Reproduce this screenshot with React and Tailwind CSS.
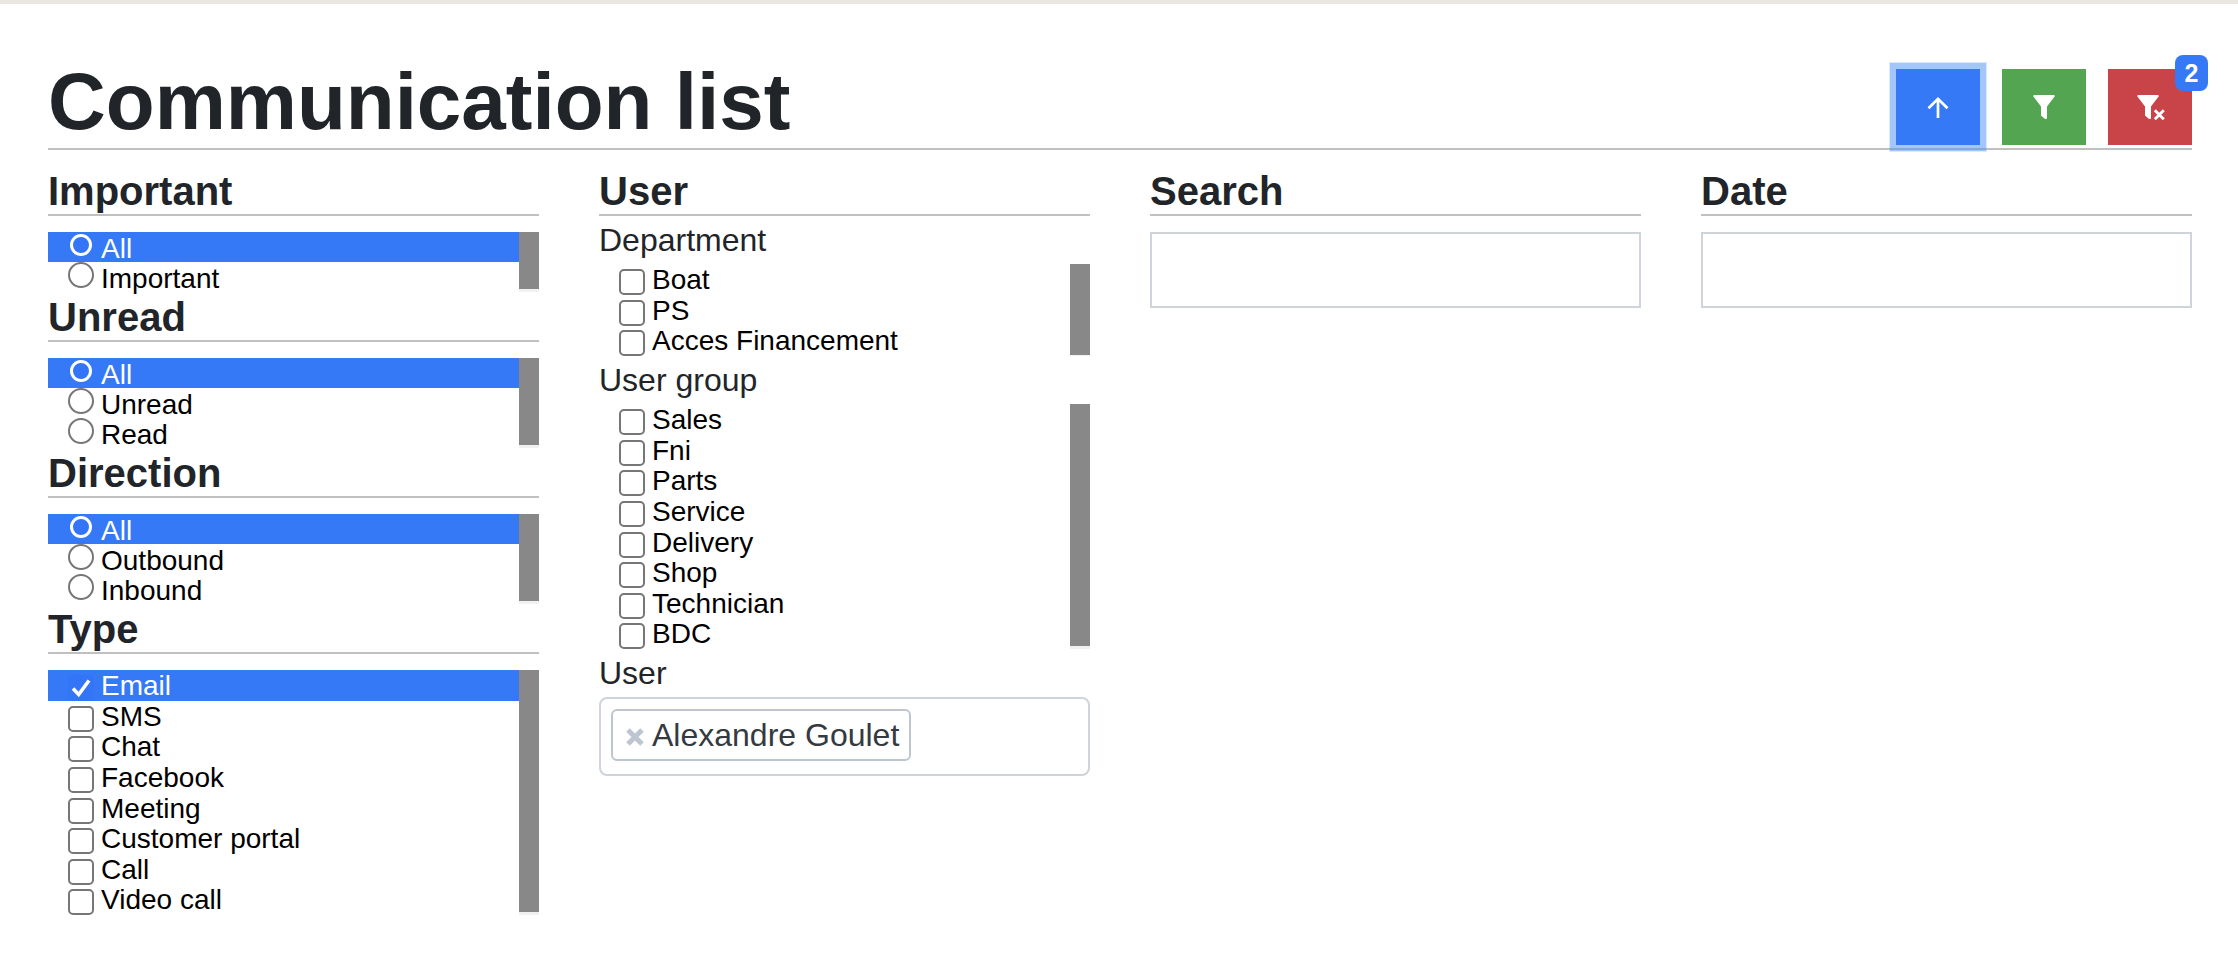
import { useId } from 'react';

const important = ['All', 'Important'];
const unread = ['All', 'Unread', 'Read'];
const direction = ['All', 'Outbound', 'Inbound'];
const types = ['Email', 'SMS', 'Chat', 'Facebook', 'Meeting', 'Customer portal', 'Call', 'Video call'];
const departments = ['Boat', 'PS', 'Acces Financement'];
const groups = ['Sales', 'Fni', 'Parts', 'Service', 'Delivery', 'Shop', 'Technician', 'BDC'];

function Heading({ children, htmlFor }) {
  return (
    <h2 className="mb-4 border-b-2 border-[#c0c0c0] pt-[2px] text-[40px] leading-[46px] font-bold">
      {htmlFor ? <label htmlFor={htmlFor}>{children}</label> : children}
    </h2>
  );
}

function Scrollbar({ tight }) {
  return (
    <div aria-hidden="true" className={`flex w-5 shrink-0 bg-[#f1f1f1] ${tight ? 'pb-px' : 'pb-[3px]'}`}>
      <div className="w-full bg-[#888888]" />
    </div>
  );
}

function RadioList({ label, options }) {
  const name = useId();
  return (
    <div role="radiogroup" aria-label={label} className="flex">
      <div className="min-w-0 grow text-[28px] leading-[28px] text-black">
        {options.map((option) => (
          <label key={option} className="flex h-[30px] items-start pl-5 has-checked:bg-[#3579f6] has-checked:text-white">
            <span className="grid h-[26px] w-[26px] shrink-0 place-items-center">
              <input
                type="radio"
                name={name}
                defaultChecked={option === 'All'}
                className="h-[26px] w-[26px] appearance-none rounded-full border-2 border-[#767676] bg-white checked:h-[22px] checked:w-[22px] checked:border-3 checked:border-white checked:bg-[#3375f6]"
              />
            </span>
            <span className="pt-[3px] pl-[7px]">{option}</span>
          </label>
        ))}
      </div>
      <Scrollbar />
    </div>
  );
}

function CheckList({ label, options, selected = [], className }) {
  return (
    <div role="group" aria-label={label} className={`flex ${className}`}>
      <div className="grid min-w-0 grow auto-rows-fr text-[28px] leading-[28px] text-black">
        {options.map((option) => (
          <label key={option} className="flex min-h-0 items-start pl-5 has-checked:bg-[#3579f6] has-checked:text-white">
            <span className="grid h-[30px] shrink-0 pt-[5px]">
              <input
                type="checkbox"
                defaultChecked={selected.includes(option)}
                className="peer col-start-1 row-start-1 h-[26px] w-[26px] appearance-none rounded-[5px] border-2 border-[#767676] bg-white checked:border-[#3375f6] checked:bg-[#3375f6]"
              />
              <svg viewBox="0 0 26 26" className="pointer-events-none invisible col-start-1 row-start-1 h-[26px] w-[26px] peer-checked:visible" fill="none" stroke="white" strokeWidth="3.6">
                <path d="M5 13.5 L10.7 19.5 L21 5.5" />
              </svg>
            </span>
            <span className="pt-[2px] pl-[7px]">{option}</span>
          </label>
        ))}
      </div>
      <Scrollbar tight={options.length < 4} />
    </div>
  );
}

function SubLabel({ children }) {
  return <div className="text-[32px] leading-[48px]">{children}</div>;
}

export default function App() {
  return (
    <div className="border-t-4 border-[#e8e8e0] bg-white pt-12 pr-[46px] pb-10 pl-12 font-['Liberation_Sans',Arial,sans-serif] text-[#212529]">
      <header className="mb-4 flex items-end justify-between border-b-2 border-[#c0c0c0]">
        <h1 className="pt-1 text-[80px] leading-[92px] font-bold">Communication list</h1>
        <div className="flex gap-[22px] pb-[3px]">
          <button type="button" aria-label="Hide filters" className="grid h-[76px] w-[84px] place-items-center bg-[#3579f6] shadow-[0_0_0_6px_rgba(73,144,248,0.38),0_0_0_7px_rgba(73,144,248,0.2)]">
            <svg viewBox="0 0 24 24" className="h-6 w-6" fill="none" stroke="white" strokeWidth="2.7">
              <path d="M12 23 V4 M2.5 13.3 L12 3.8 L21.5 13.3" />
            </svg>
          </button>
          <button type="button" aria-label="Apply filters" className="grid h-[76px] w-[84px] place-items-center bg-[#53a551]">
            <svg viewBox="0 0 24 24" className="h-6 w-6" fill="white">
              <path d="M2 0 H22 Q23 0 22.6 1.6 L15 11.5 V23 Q15 24 14 24 H13 L9 20.5 V11.5 L1.4 1.6 Q1 0 2 0 Z" />
            </svg>
          </button>
          <div className="relative">
            <button type="button" aria-label="Clear filters" className="grid h-[76px] w-[84px] place-items-center bg-[#c94449]">
              <svg viewBox="0 0 30 26" className="h-[26px] w-[30px]" fill="white">
                <path d="M3 1 H23 Q24 1 23.6 2.6 L16 12.5 V24 Q16 25 15 25 H14 L10 21.5 V12.5 L2.4 2.6 Q2 1 3 1 Z" />
                <path d="M19.8 16.3 L28.8 25.3 M28.8 16.3 L19.8 25.3" stroke="white" strokeWidth="2.8" />
              </svg>
            </button>
            <span className="absolute -top-[14px] -right-4 grid h-9 w-[33px] place-items-center rounded-lg bg-[#3579f6] text-[25px] leading-6 font-bold text-white">2</span>
          </div>
        </div>
      </header>

      <main className="grid grid-cols-4 items-start gap-[60px]">
        <section>
          <Heading>Important</Heading>
          <RadioList label="Important" options={important} />
          <Heading>Unread</Heading>
          <RadioList label="Unread" options={unread} />
          <Heading>Direction</Heading>
          <RadioList label="Direction" options={direction} />
          <Heading>Type</Heading>
          <CheckList label="Type" options={types} selected={['Email']} className="h-[245px]" />
        </section>

        <section>
          <div className="-mb-4">
            <Heading>User</Heading>
          </div>
          <SubLabel>Department</SubLabel>
          <CheckList label="Department" options={departments} className="h-[92px]" />
          <SubLabel>User group</SubLabel>
          <CheckList label="User group" options={groups} className="h-[245px]" />
          <SubLabel>
            <label htmlFor="user">User</label>
          </SubLabel>
          <div className="flex h-[79px] items-start rounded-lg border-2 border-[#ced4da] p-[10px]">
            <span className="flex h-[52px] shrink-0 items-center rounded-md border-2 border-[#bdc6d0] pr-[10px] pl-[13px] text-[32px] leading-[48px] text-[#343a40]">
              <button type="button" aria-label="Remove Alexandre Goulet" className="mt-1 mr-2">
                <svg viewBox="0 0 18 18" className="h-[18px] w-[18px]" stroke="#bdc6d0" strokeWidth="5">
                  <path d="M2 2 L16 16 M16 2 L2 16" />
                </svg>
              </button>
              Alexandre Goulet
            </span>
            <input id="user" type="text" className="h-[52px] min-w-0 grow bg-transparent px-2 text-[32px] outline-none" />
          </div>
        </section>

        <section>
          <Heading htmlFor="search">Search</Heading>
          <input id="search" type="text" className="block h-[76px] w-full border-2 border-[#ced4da] bg-white px-6 text-[32px]" />
        </section>

        <section>
          <Heading htmlFor="date">Date</Heading>
          <input id="date" type="text" className="block h-[76px] w-full border-2 border-[#ced4da] bg-white px-6 text-[32px]" />
        </section>
      </main>
    </div>
  );
}
